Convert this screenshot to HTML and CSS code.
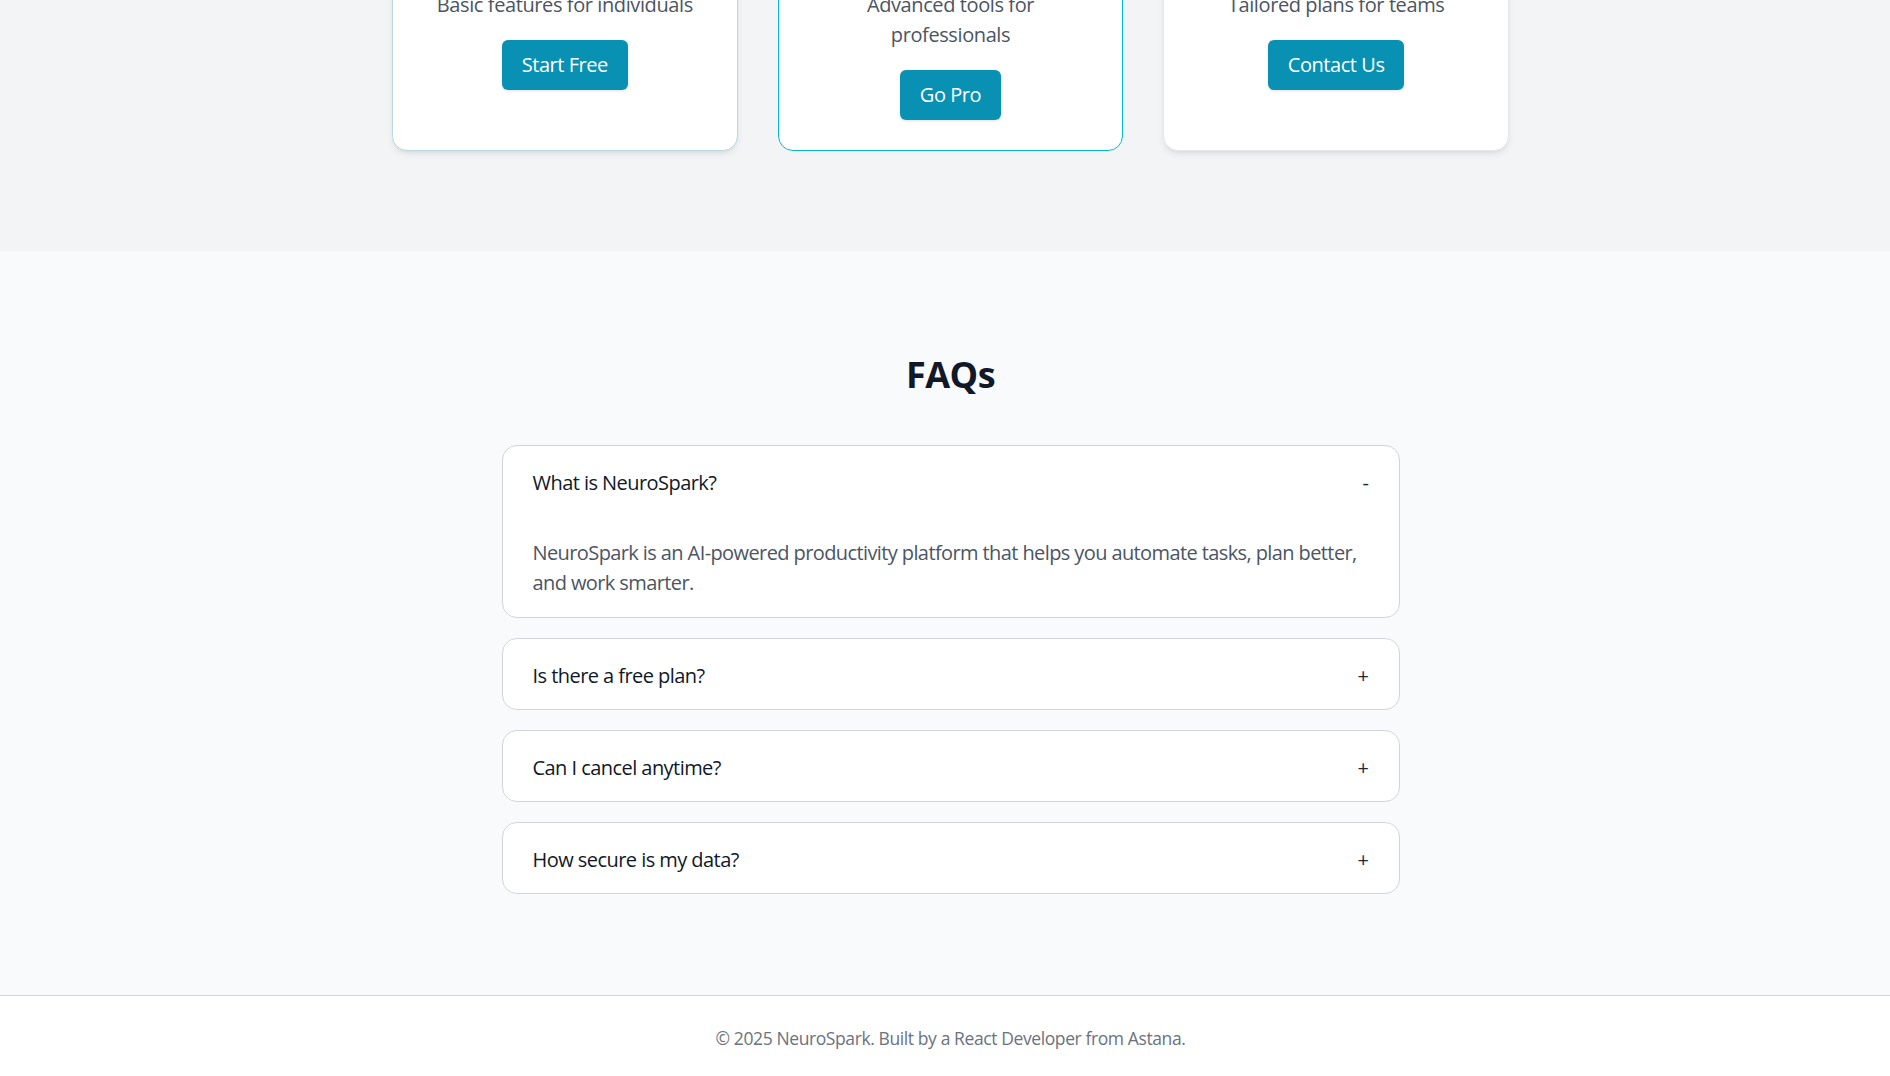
FILE: index.html
```html
<!DOCTYPE html>
<html lang="en">
<head>
<meta charset="utf-8">
<title>NeuroSpark</title>
<link rel="stylesheet" href="styles.css">
</head>
<body>
<main class="page">
  <section class="section pricing">
    <div class="plans">
      <div class="plan plan-basic">
        <h3 class="plan-name">Free</h3>
        <p class="plan-price">$0</p>
        <p class="plan-desc">Basic features for individuals</p>
        <a class="btn" href="#">Start Free</a>
      </div>
      <div class="plan plan-pro">
        <h3 class="plan-name">Pro</h3>
        <p class="plan-price">$19</p>
        <p class="plan-desc">Advanced tools for professionals</p>
        <a class="btn" href="#">Go Pro</a>
      </div>
      <div class="plan plan-team">
        <h3 class="plan-name">Enterprise</h3>
        <p class="plan-price">Custom</p>
        <p class="plan-desc">Tailored plans for teams</p>
        <a class="btn" href="#">Contact Us</a>
      </div>
    </div>
  </section>

  <section class="section faq">
    <h2 class="faq-title">FAQs</h2>
    <div class="faq-list">
      <div class="faq-item open">
        <button class="faq-q"><span>What is NeuroSpark?</span><span class="faq-sign">-</span></button>
        <p class="faq-a">NeuroSpark is an AI-powered productivity platform that helps you automate tasks, plan better, and work smarter.</p>
      </div>
      <div class="faq-item">
        <button class="faq-q"><span>Is there a free plan?</span><span class="faq-sign">+</span></button>
      </div>
      <div class="faq-item">
        <button class="faq-q"><span>Can I cancel anytime?</span><span class="faq-sign">+</span></button>
      </div>
      <div class="faq-item">
        <button class="faq-q"><span>How secure is my data?</span><span class="faq-sign">+</span></button>
      </div>
    </div>
  </section>

  <footer class="section footer">
    <p class="footer-text">© 2025 NeuroSpark. Built by a React Developer from Astana.</p>
  </footer>
</main>
</body>
</html>
```

FILE: styles.css
```css
* {
  box-sizing: border-box;
}

html, body {
  margin: 0;
  padding: 0;
}

body {
  font-family: "Open Sans", "Noto Sans", "Liberation Sans", sans-serif;
  background: #ffffff;
  color: #111827;
  overflow: hidden;
}

.page {
  margin-top: -141px;
}

.section {
  padding-left: 11px;
}

/* Pricing */
.pricing {
  background: #f3f4f6;
  padding-bottom: 100px;
}

.plans {
  width: 1117px;
  margin: 0 auto;
  display: grid;
  grid-template-columns: repeat(3, 1fr);
  gap: 40px;
}

.plan {
  background: #ffffff;
  border: 1px solid #e5e7eb;
  border-radius: 15px;
  padding: 30px;
  text-align: center;
  box-shadow: 0 4px 8px -2px rgba(0, 0, 0, 0.10), 0 2px 4px -2px rgba(0, 0, 0, 0.06);
}

.plan-basic {
  border-color: #b8d8e1;
}

.plan-pro {
  border-color: #06b6d4;
  box-shadow: none;
}

.plan-name {
  margin: 0 0 10px;
  font-size: 25px;
  line-height: 35px;
  font-weight: 600;
}

.plan-price {
  margin: 0 0 10px;
  font-size: 37px;
  line-height: 45px;
  font-weight: 700;
}

.plan-desc {
  margin: 0 0 20px;
  font-size: 20px;
  line-height: 30px;
  color: #4b5563;
  letter-spacing: -0.4px;
}

.btn {
  display: inline-block;
  padding: 10px 20px;
  font-size: 20px;
  line-height: 30px;
  letter-spacing: -0.45px;
  color: #ffffff;
  background: #0891b2;
  border-radius: 6px;
  text-decoration: none;
  box-shadow: 0 1px 3px rgba(0, 0, 0, 0.12);
}

/* FAQ */
.faq {
  background: #f9fafb;
  padding-top: 101px;
  padding-bottom: 101px;
}

.faq-title {
  margin: 0 0 48px;
  text-align: center;
  font-size: 36px;
  line-height: 45px;
  font-weight: 700;
  color: #111827;
  letter-spacing: -0.5px;
}

.faq-list {
  width: 898px;
  margin: 0 auto;
  display: flex;
  flex-direction: column;
  gap: 20px;
}

.faq-item {
  background: #ffffff;
  border: 1px solid #d1d5db;
  border-radius: 15px;
}

.faq-q {
  width: 100%;
  display: flex;
  justify-content: space-between;
  align-items: center;
  padding: 22px 30px 18px;
  border: 0;
  background: transparent;
  font-family: inherit;
  font-size: 20px;
  line-height: 30px;
  letter-spacing: -0.55px;
  color: #111827;
  text-align: left;
  cursor: pointer;
}

.faq-sign {
  font-size: 20px;
  color: #1f2937;
}

.faq-a {
  margin: 0;
  padding: 22px 30px 19px;
  font-size: 20px;
  line-height: 30px;
  letter-spacing: -0.6px;
  color: #4b5563;
}

/* Footer */
.footer {
  background: #ffffff;
  border-top: 1px solid #d1d5db;
  padding-top: 30px;
  padding-bottom: 30px;
}

.footer-text {
  margin: 0;
  text-align: center;
  font-size: 17.5px;
  line-height: 25px;
  color: #6b7280;
  letter-spacing: -0.4px;
}
```
